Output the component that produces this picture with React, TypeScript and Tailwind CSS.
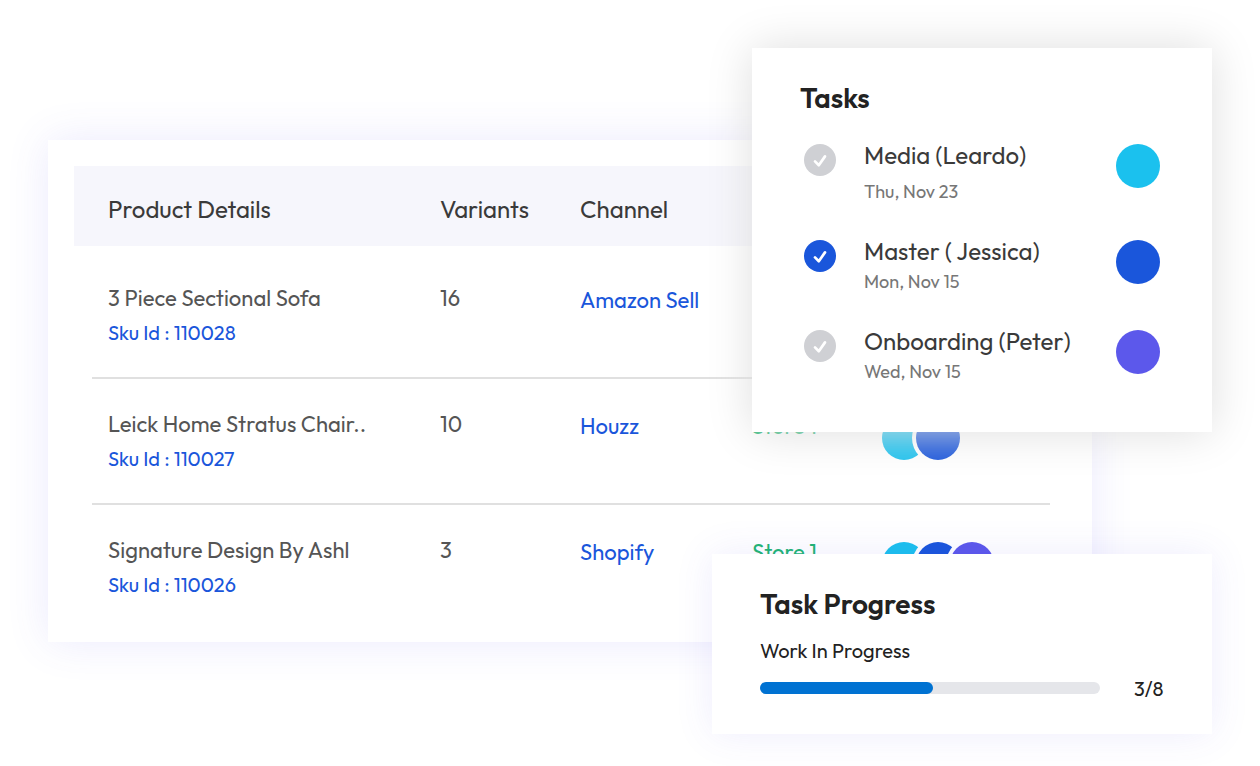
type Product = {
  name: string;
  sku: string;
  variants: number;
  channel: string;
  store?: string;
  owners: string[];
};

type Task = {
  id: string;
  name: string;
  date: string;
  done: boolean;
  color: string;
  dateGap: string;
};

const CYAN = "bg-[#1bc1ee]";
const BLUE = "bg-[#1a56db]";
const VIOLET = "bg-[#5c58eb]";

const products: Product[] = [
  { name: "3 Piece Sectional Sofa", sku: "110028", variants: 16, channel: "Amazon Sell", owners: [] },
  { name: "Leick Home Stratus Chair..", sku: "110027", variants: 10, channel: "Houzz", store: "Store 1", owners: [CYAN, BLUE] },
  { name: "Signature Design By Ashl", sku: "110026", variants: 3, channel: "Shopify", store: "Store 1", owners: [CYAN, BLUE, VIOLET] },
];

const tasks: Task[] = [
  { id: "media", name: "Media (Leardo)", date: "Thu, Nov 23", done: false, color: CYAN, dateGap: "mt-[9px]" },
  { id: "master", name: "Master ( Jessica)", date: "Mon, Nov 15", done: true, color: BLUE, dateGap: "mt-[3px]" },
  { id: "onboarding", name: "Onboarding (Peter)", date: "Wed, Nov 15", done: false, color: VIOLET, dateGap: "mt-[3px]" },
];

const columns = "grid grid-cols-[332px_140px_172px_130px_1fr]";

function ProductTable() {
  return (
    <section className="mr-[120px] bg-white px-[26px] pt-[26px] pb-[13px] shadow-[0_0_40px_rgba(90,80,240,0.12)]">
      <table className="block w-full">
        <thead className="block bg-[#f6f6fc] text-[#3a3a3a]">
          <tr className={`${columns} h-20 items-center px-[34px] pt-1.5 text-left text-2xl`}>
            <th className="font-normal" scope="col">Product Details</th>
            <th className="font-normal" scope="col">Variants</th>
            <th className="font-normal" scope="col">Channel</th>
          </tr>
        </thead>
        <tbody className="block pt-[7px] pr-4 pl-[18px] text-[22px] leading-7">
          {products.map((p) => (
            <tr key={p.sku} className={`${columns} border-b-2 border-[#e0e0e0] px-4 pb-[30px] last:border-b-0`}>
              <td className="pt-[31px] whitespace-nowrap text-[#555]">
                {p.name}
                <a href="#" className="mt-[7px] block text-xl leading-7 text-[#1a56db]">Sku Id : {p.sku}</a>
              </td>
              <td className="pt-[31px] text-[#555]">{p.variants}</td>
              <td className="pt-[33px]">
                <a href="#" className="text-[#1a56db]">{p.channel}</a>
              </td>
              <td className="pt-[33px] text-[#22b573]">{p.store}</td>
              <td className="flex items-start pt-[37px]">
                {p.owners.map((color) => (
                  <span key={color} className={`-mr-2.5 size-11 shrink-0 rounded-full ring-4 ring-white first:ring-0 ${color}`} />
                ))}
              </td>
            </tr>
          ))}
        </tbody>
      </table>
    </section>
  );
}

function TasksCard() {
  return (
    <section className="absolute top-12 right-12 w-[460px] bg-white pt-[34px] pr-[52px] pb-12 pl-12 shadow-[0_0_44px_rgb(222,222,222)]">
      <h2 className="text-[28px] leading-8 font-semibold text-[#222]">Tasks</h2>
      <ul className="mt-[25px] flex flex-col gap-[31px]">
        {tasks.map((t) => (
          <li key={t.id} className="flex items-start">
            <span className="mt-[5px] ml-1 grid size-8 shrink-0">
              <input
                id={t.id}
                type="checkbox"
                defaultChecked={t.done}
                className="col-start-1 row-start-1 size-8 appearance-none rounded-full bg-[#cfd0d4] checked:bg-[#1a56db]"
              />
              <svg viewBox="0 0 32 32" className="pointer-events-none col-start-1 row-start-1 size-8" aria-hidden="true">
                <path d="M11 17.4 14.8 21.2 21 12.4" fill="none" stroke="white" strokeWidth="2.7" strokeLinecap="round" strokeLinejoin="round" />
              </svg>
            </span>
            <div className="ml-7 flex-1">
              <label htmlFor={t.id} className="block text-2xl leading-8 whitespace-nowrap text-[#3a3a3a]">{t.name}</label>
              <p className={`text-lg leading-6 text-[#777] ${t.dateGap}`}>{t.date}</p>
            </div>
            <span className={`mt-[5px] size-11 shrink-0 rounded-full ${t.color}`} />
          </li>
        ))}
      </ul>
    </section>
  );
}

function ProgressCard() {
  return (
    <section className="absolute top-[554px] right-12 w-[500px] bg-white px-12 pt-[34px] pb-[33px] shadow-[0_0_36px_rgba(90,80,240,0.1)]">
      <h2 className="text-[28px] leading-8 font-semibold text-[#222]">Task Progress</h2>
      <p id="progress-label" className="mt-[19px] text-xl leading-6 text-[#222]">Work In Progress</p>
      <div className="mt-3.5 flex items-start gap-[34px]">
        <div
          role="progressbar"
          aria-labelledby="progress-label"
          aria-valuemin={0}
          aria-valuemax={8}
          aria-valuenow={3}
          className="mt-[5px] h-3 flex-1 rounded-full bg-[#e5e6ea]"
        >
          <div className="h-full w-[51%] rounded-full bg-[#0072d2]" />
        </div>
        <span className="w-[30px] text-xl leading-6 text-[#222]">3/8</span>
      </div>
    </section>
  );
}

export default function App() {
  return (
    <main className="relative min-h-screen overflow-hidden bg-white px-12 pt-[140px] pb-12 font-['Outfit','Lato',sans-serif]">
      <ProductTable />
      <TasksCard />
      <ProgressCard />
    </main>
  );
}
